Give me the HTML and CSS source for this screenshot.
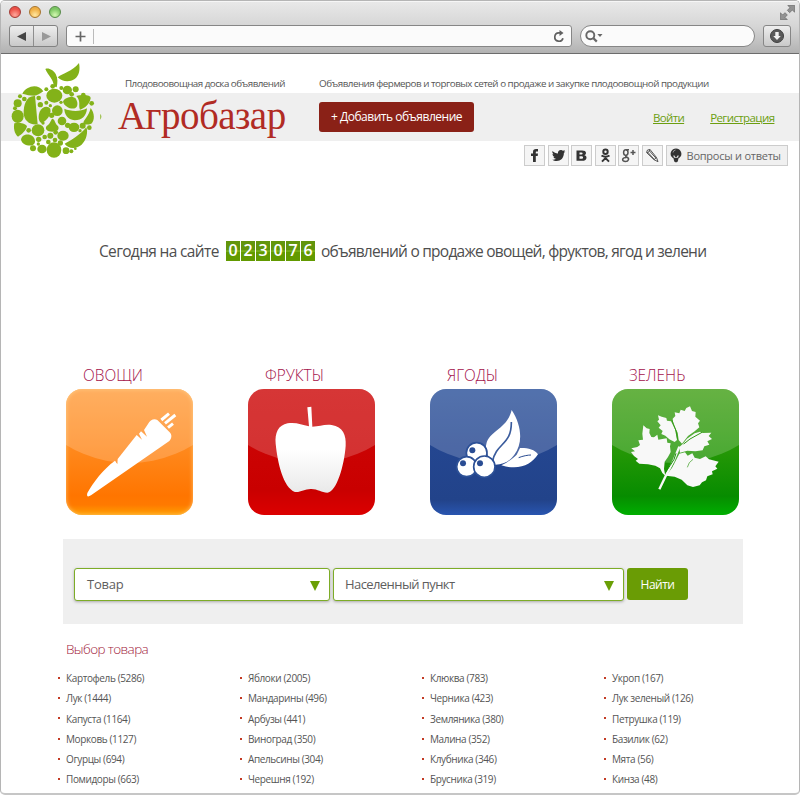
FILE: index.html
```
<!DOCTYPE html>
<html lang="ru">
<head>
<meta charset="utf-8">
<title>Агробазар</title>
<link rel="stylesheet" href="styles.css">
</head>
<body>
<div class="window">
  <header class="chrome">
    <div class="titlebar">
      <i class="light red"></i><i class="light amber"></i><i class="light green"></i>
      <svg class="expand" width="15" height="15" viewBox="0 0 45 45"><path d="M23 1h21v21l-7-7-8 8-7-7 8-8zM1 44V23l7 7 7-7 7 7-7 7 7 7z" fill="#929292" stroke="#666" stroke-width="2"/></svg>
    </div>
    <div class="toolbar">
      <div class="nav">
        <span><svg width="10" height="9" viewBox="0 0 10 9"><path d="M0 4.5 9 0v9z" fill="#444"/></svg></span>
        <span><svg width="10" height="9" viewBox="0 0 10 9"><path d="M10 4.5 1 0v9z" fill="#999"/></svg></span>
      </div>
      <div class="address">
        <svg width="11" height="11" viewBox="0 0 11 11"><path d="M5.5 .5v10M.5 5.500h10" stroke="#666" stroke-width="1.700"/></svg>
        <i class="divider"></i>
        <svg class="reload" width="12" height="13" viewBox="0 0 12 13"><path d="M8 2.800H5.800a4.200 4.200 0 1 0 4.200 5.400" fill="none" stroke="#606060" stroke-width="1.700"/><path d="M6.500 0 10.500 3 6.500 6z" fill="#606060"/></svg>
      </div>
      <div class="find">
        <svg width="18" height="13" viewBox="0 0 18 13"><circle cx="5.3" cy="5.2" r="4" fill="none" stroke="#686868" stroke-width="1.9"/><path d="m8.2 8 3.6 3.6" stroke="#686868" stroke-width="2.2"/><path d="M12.3 4h5.2L15 7z" fill="#686868"/></svg>
      </div>
      <div class="download">
        <svg width="14" height="14" viewBox="0 0 14 14"><circle cx="7" cy="7" r="6.5" fill="#5a5a5a" stroke="#404040"/><path d="M5.3 3h3.4v4h2.100L7 11 3.200 7h2.100z" fill="#f1f1f1"/></svg>
      </div>
    </div>
  </header>

  <main class="site">
    <div class="taglines">
      <span class="tag-left">Плодовоовощная доска объявлений</span>
      <span class="tag-right">Объявления фермеров и торговых сетей о продаже и закупке плодоовощной продукции</span>
    </div>
    <div class="band">
      <svg class="logo" width="94" height="100" viewBox="30 180 282 300">
        <g fill="#83b219">
          <path d="M136 207c9-5 24 3 31 15 7 13 6 27 3 40l-9-3c1-21-16-30-25-52z"/>
          <path d="M173 232c16-13 43-17 64-43 4 20 1 38-13 48-17 11-37 8-51-5z"/>
          <path d="M67 281c12-24 48-32 63-7-11 7-18 13-27 13-15 0-22-3-36-6z"/>
          <path d="M105 288c-26-2-35 28-34 52 1 20 15 36 42 33z"/>
          <ellipse cx="163" cy="287" rx="24" ry="21"/><ellipse cx="202" cy="270" rx="14" ry="13"/><circle cx="227" cy="268" r="9"/>
          <circle cx="158" cy="259" r="7"/><circle cx="184" cy="264" r="6"/><circle cx="139" cy="268" r="6"/><circle cx="215" cy="283" r="7"/>
          <circle cx="60" cy="289" r="6"/><circle cx="53" cy="310" r="12"/><circle cx="73" cy="297" r="7"/><circle cx="116" cy="294" r="7"/>
          <ellipse cx="53" cy="349" rx="18" ry="20"/><circle cx="45" cy="325" r="6"/>
          <path d="M189 305c6-15 33-18 39-8 6 11 6 23-3 28-14 4-33-7-36-20z"/>
          <path d="M229 288c16-4 44-5 43 7-3 17-17 30-32 34-6-13 4-24-11-41z"/>
          <path d="M193 326c18 8 46 10 68-1-2 25-15 35-37 36-22-3-31-19-31-35z"/>
          <path d="M272 324c12 14 13 38 2 47-8 3-24 5-24-2 2-13 15-16 22-45z"/>
          <circle cx="172" cy="332" r="16"/><path d="M119 335c8-16 25-19 32-8 4 15-10 36-27 42-9-5-10-20-5-34z"/>
          <circle cx="139" cy="308" r="6"/><circle cx="121" cy="314" r="8"/><circle cx="151" cy="317" r="5"/><circle cx="183" cy="307" r="5"/><circle cx="275" cy="310" r="7"/><circle cx="250" cy="285" r="7"/>
          <circle cx="186" cy="363" r="13"/><circle cx="203" cy="376" r="8"/><circle cx="155" cy="346" r="8"/>
          <path d="M156 356c10 1 8 15 18 22 6 11-4 17-17 17-15 0-24-8-17-17 8-5 10-11 16-22z"/>
          <path d="M43 370c10-3 29-2 38 8-2 12-14 24-27 32-11-8-14-26-11-40z"/>
          <ellipse cx="114" cy="391" rx="19" ry="18"/><circle cx="86" cy="391" r="7"/><circle cx="129" cy="369" r="5"/>
          <ellipse cx="222" cy="382" rx="16" ry="14"/><circle cx="248" cy="377" r="9"/><circle cx="268" cy="383" r="7"/><circle cx="240" cy="392" r="5"/>
          <path d="M63 419c2-16 23-20 35-10 10 10 9 23-1 27-16 3-31-4-34-17z"/>
          <ellipse cx="189" cy="407" rx="17" ry="15"/><circle cx="151" cy="407" r="9"/><circle cx="134" cy="411" r="7"/><circle cx="116" cy="418" r="8"/><circle cx="167" cy="397" r="7"/>
          <path d="M194 431c19-10 47-27 65-49 6 14 0 40-15 53-19 15-42 9-50-4z"/>
          <ellipse cx="162" cy="450" rx="22" ry="23"/><ellipse cx="126" cy="447" rx="14" ry="13"/><circle cx="99" cy="445" r="9"/>
          <circle cx="145" cy="426" r="7"/><circle cx="165" cy="420" r="7"/><circle cx="181" cy="429" r="8"/><circle cx="198" cy="452" r="10"/><circle cx="214" cy="454" r="6"/><circle cx="115" cy="432" r="5"/><circle cx="226" cy="446" r="4"/>
          <path d="M301 341q6 8 0 18z"/>
        </g>
      </svg>
      <h1 class="brand">Агробазар</h1>
      <a class="add">+ Добавить объявление</a>
      <nav class="auth"><a class="login">Войти</a><a class="register">Регистрация</a></nav>
    </div>
    <div class="social">
      <span class="chip"><svg viewBox="0 0 15 15"><path d="M6 14V8H4V5.600h2V4c0-2.200 1-3 3-3h2v2.400H9.600c-.7 0-.8.3-.8.900v1.300H11L10.700 8H8.800v6z"/></svg></span>
      <span class="chip"><svg viewBox="0 0 15 15"><path d="M1.500 3c1.500 1.500 3.200 2.400 5.500 2.500C6.700 3.300 8 2 9.800 2c1 0 1.500.3 2.100.8L14 2.200l-1 1.600 1.300-.2-1.400 1.500c0 5-3.200 8-7.200 8-1.800 0-3.200-.5-4.500-1.300 1.500 0 2.700-.3 3.700-1.100-1.200-.1-2-.8-2.400-1.800h1.100C2.200 8.500 1.500 7.500 1.500 6l1.100.3C1.600 5.500 1 4.200 1.500 3z"/></svg></span>
      <span class="chip"><svg viewBox="0 0 15 15"><path fill-rule="evenodd" d="M2.500 2.500H8c2.600 0 4 .8 4 2.600 0 1.200-.7 1.900-1.800 2.200 1.500.2 2.300 1.100 2.300 2.400 0 2-1.600 3.100-4.300 3.100H2.500zM5.500 4.500v2h1.800c1.800 0 1.800-2 0-2zm0 3.700v2.600h2c2.100 0 2.100-2.600 0-2.600z"/></svg></span>
      <span class="chip"><svg viewBox="0 0 15 15"><g fill="none" stroke="#333" stroke-width="2"><circle cx="7.500" cy="3.800" r="2.200"/><path d="M3.500 7.500c2.500 1.600 5.500 1.600 8 0M4 13.600l3.500-3.500 3.500 3.500M7.500 8.500v2"/></g></svg></span>
      <span class="chip"><svg viewBox="0 0 15 15"><g fill="none" stroke="#555" stroke-width="1.500"><ellipse cx="4.800" cy="4.600" rx="2.200" ry="2.800"/><path d="M5 1.800h3M5.500 7.200c-1.600.7-.6 1.500.6 2 2.500 1.100 1.600 4.300-1.600 4.300-4 0-4-3.800 1-3.900M12 2v5M9.500 4.500h5"/></g></svg></span>
      <span class="chip"><svg viewBox="0 0 15 15"><path d="M1.500 4.500 2.500 2 5 1.500l6.500 8 1.500 4.200-4-2zM3 4.500l6.500 7.200M4.500 3l6.500 7.200M2 4.500l1.500-.2L5 1.500M9 11.700l2.500-2.200" fill="none" stroke="#555"/></svg></span>
      <a class="faq"><svg width="12" height="15" viewBox="0 0 12 15"><path d="M6 .5a5.300 5.300 0 0 1 4.200 8.600L8 11H4L1.800 9.100A5.300 5.300 0 0 1 6 .5z" fill="#333"/><path d="M3.200 7.500h1.300l.8 1.500h1.400l.8-1.500h1.300L8 9.800H4z" fill="#ddd"/><path d="M3 4.500A3 3 0 0 1 5.500 2" stroke="#999" fill="none"/><path d="M3.700 11h4.600l-.5 2.500L6 14.500l-1.800-1z" fill="#333"/></svg><span>Вопросы и ответы</span></a>
    </div>

    <p class="counter">
      <span class="count-before">Сегодня на сайте</span>
      <span class="digits"><b>0</b><b>2</b><b>3</b><b>0</b><b>7</b><b>6</b></span>
      <span class="count-after">объявлений о продаже овощей, фруктов, ягод и зелени</span>
    </p>

    <section class="cats">
      <a class="cat"><h2>ОВОЩИ</h2>
        <span class="tile veg"><svg viewBox="0 0 381 381"><path d="M64 312C80 282 112 240 147 215l7 10 1-15 57-72 16 14-9-18 6-7 18 16-9-20 12-18c6-12 18-17 28-12l37 37c8 8 6 19-1 26L75 319q-15 9-11-7z" fill="#fff"/><path d="m286 93 23-19M297 103l31-25M306 116l15-12" stroke="#fff" stroke-width="9" fill="none"/></svg></span></a>
      <a class="cat"><h2>ФРУКТЫ</h2>
        <span class="tile fruit"><svg viewBox="0 0 381 381"><defs><linearGradient id="pale" x2="0" y2="1"><stop offset=".5" stop-color="#fff"/><stop offset="1" stop-color="#e9e9e9"/></linearGradient></defs><path d="M183 112l-5-57 12-2 3 60c22 0 35-8 58-5 34 5 44 30 42 62-4 58-27 139-55 141-18 0-30-12-50-11-18 0-31 11-47 9-36-15-52-87-58-145-3-32 8-56 36-61 26-4 42 5 64 9z" fill="url(#pale)"/></svg></span></a>
      <a class="cat"><h2>ЯГОДЫ</h2>
        <span class="tile berry"><svg viewBox="0 0 381 381"><path d="M214 229c18-9 35-20 46-32l10-20c20-1 45 4 54 19-20 32-57 49-110 33z" fill="#fff"/><path d="M266 206c12-5 28-8 37-8" fill="none" stroke="#2a4c92" stroke-width="3"/><path d="M245 63c31 46 34 102 8 134-14 20-34 31-60 30-15-18-30-40-24-62 8-40 63-45 76-102z" fill="#fff"/><path d="M244 99c1 71-45 60-57 120" fill="none" stroke="#3b5c9d" stroke-width="5"/><g fill="#fff" stroke="#2d5197" stroke-width="5"><circle cx="140" cy="192" r="31"/><circle cx="110" cy="233" r="30"/><circle cx="163" cy="233" r="32"/></g><g fill="#294c93"><circle cx="127" cy="184" r="9"/><circle cx="99" cy="223" r="9"/><circle cx="150" cy="223" r="9"/></g></svg></span></a>
      <a class="cat"><h2>ЗЕЛЕНЬ</h2>
        <span class="tile herb"><svg viewBox="36 87 381 381"><g fill="#f8f8f8"><path d="M130 196l10 9 9 2-1 12 6 12 8 1 10-8 3 15 12-2 13-2 2 13 10 2-2 9 2 17-8 15-10 14-2 22 4 20-9-8-7-14-14-8-22-4-26-2-11-9 7-5-12-9-9-12 12-2-11-9 18-4 8-6-5-14 14-2-2-18z"/><path d="M174 166l11 4 14 4 2 8 12 2 12 24 6 32-7 6-16-8-12-11-12-5 4-9-12-10 6-7-10-12 5-5z"/><path d="M270 139l6 14 11 3-1 14 14 12-6 8 4 12-14 12-20 14-18 23-10-11-3-22-13-26-2-16 8-8-2-11 14 3 4-11 12 4 5-9z"/><path d="M249 251l12-15 23-16 16-5 8 4 26-1-8 10 10 9-14 7 6 10-15 5-5 12-22 3-24-2-22 6-2-17z"/><path d="M198 347l18-24 12-22 10-20 17-4 8 10 14-7 7 13 16 4 17-8 10 9 29 7-10 14 6 7-16 8 2 9-16 6-4 12-12 6-7 9-20 5-17-5-17-17-21-9z"/></g><path d="M178 388l18-38 24-46 18-44" fill="none" stroke="#f8f8f8" stroke-width="7"/><path d="M216 181l13 34 4 24M306 217l-36 20-19 15" fill="none" stroke="#329916" stroke-width="3"/><path d="M228 280q-3 18-18 37l-14 21" fill="none" stroke="#189005" stroke-width="3"/><path d="M262 322l6-14 11-10" fill="none" stroke="#329916" stroke-width="2"/></svg></span></a>
    </section>

    <form class="search">
      <div class="field goods"><span>Товар</span><i></i></div>
      <div class="field town"><span>Населенный пункт</span><i></i></div>
      <button type="button">Найти</button>
    </form>

    <h3 class="choose">Выбор товара</h3>
    <section class="lists">
      <ul><li>Картофель (5286)</li><li>Лук (1444)</li><li>Капуста (1164)</li><li>Морковь (1127)</li><li>Огурцы (694)</li><li>Помидоры (663)</li></ul>
      <ul><li>Яблоки (2005)</li><li>Мандарины (496)</li><li>Арбузы (441)</li><li>Виноград (350)</li><li>Апельсины (304)</li><li>Черешня (192)</li></ul>
      <ul><li>Клюква (783)</li><li>Черника (423)</li><li>Земляника (380)</li><li>Малина (352)</li><li>Клубника (346)</li><li>Брусника (319)</li></ul>
      <ul><li>Укроп (167)</li><li>Лук зеленый (126)</li><li>Петрушка (119)</li><li>Базилик (62)</li><li>Мята (56)</li><li>Кинза (48)</li></ul>
    </section>
  </main>
</div>
</body>
</html>
```
FILE: styles.css
```
* { box-sizing: border-box; }
body { margin: 0; height: 800px; overflow: hidden; background: #fff; font-family: "Open Sans", "Noto Sans", sans-serif; color: #555; }
h1, h2, h3, p, ul { margin: 0; padding: 0; font-weight: 400; }
svg { display: block; flex: none; }
.window { width: 800px; height: 795px; border: 1px solid #b5b5b5; border-bottom: 2px solid #c6c6c6; border-radius: 5px; overflow: hidden; background: #fff; }

.chrome { height: 53px; background: linear-gradient(#e9e9e9, #d5d5d5 50%, #b2b2b2); border-bottom: 1px solid #6c6c6c; box-shadow: inset 0 1px #f6f6f6; }
.titlebar { height: 24px; display: flex; padding: 5px 4px 0 8px; gap: 8px; }
.light { width: 12px; height: 12px; border-radius: 50%; border: 1px solid; }
.red { background: radial-gradient(circle at 50% 80%, #ffa89c, #ec5148 65%); border-color: #a33a34; }
.amber { background: radial-gradient(circle at 50% 80%, #ffe7a0, #efae43 65%); border-color: #a6742e; }
.green { background: radial-gradient(circle at 50% 80%, #d3f8b0, #7cc663 65%); border-color: #578a49; }
.expand { margin-left: auto; margin-top: -1px; }
.toolbar { display: flex; padding-left: 8px; height: 22px; }
.nav { display: flex; width: 49px; border: 1px solid #828282; border-radius: 3px; background: linear-gradient(#eee, #c9c9c9); margin-right: 8px; }
.nav span { flex: 1; display: grid; place-items: center; }
.nav span + span { border-left: 1px solid #8e8e8e; }
.address { width: 506px; display: flex; align-items: center; padding: 0 6px 0 8px; border: 1px solid #868686; border-radius: 3px; background: #fbfbfb; margin-right: 8px; }
.divider { width: 1px; height: 15px; background: #bbb; margin-left: 7px; }
.reload { margin-left: auto; }
.find { width: 175px; display: flex; align-items: center; padding-left: 4px; border: 1px solid #868686; border-radius: 11px; background: #fbfbfb; margin-right: 8px; }
.download { width: 28px; display: grid; place-items: center; border: 1px solid #868686; border-radius: 3px; background: linear-gradient(#eee, #c9c9c9); }

.taglines { height: 39px; display: flex; padding: 22px 0 0 124px; font-size: 9.800px; line-height: 15px; white-space: nowrap; }
.tag-left { width: 194px; letter-spacing: -.52px; }
.tag-right { letter-spacing: -.49px; }
.band { position: relative; height: 48px; display: flex; background: #efefef; }
.logo { position: absolute; left: 9px; top: -33px; }
.brand { width: 201px; margin-left: 117px; font: 39px/46px "Liberation Serif", serif; color: #b12b24; white-space: nowrap; letter-spacing: -.55px; }
.add { width: 155px; height: 30px; margin-top: 9px; border-radius: 3px; background: #8a2117; color: #fff; font-size: 12px; line-height: 29px; text-align: center; letter-spacing: -.48px; white-space: nowrap; }
.auth { display: flex; margin-left: 179px; font-size: 11.500px; line-height: 49px; color: #6c9e10; white-space: nowrap; }
.auth a { text-decoration: underline; }
.login { margin-right: 26px; letter-spacing: -.65px; }
.register { letter-spacing: -.6px; }
.social { display: flex; gap: 2.600px; padding: 4px 0 0 523px; }
.chip, .faq { height: 21px; border: 1px solid #ccc; background: #f5f5f5; }
.chip { width: 21px; display: grid; place-items: center; }
.chip svg { width: 15px; height: 15px; fill: #333; }
.faq { width: 122px; display: flex; align-items: center; gap: 5px; padding-left: 3px; font-size: 11px; line-height: 19px; letter-spacing: -.25px; white-space: nowrap; background: #f0f0f0; color: #666; }

.counter { margin-top: 75px; height: 20px; display: flex; padding-left: 98px; font-size: 15.500px; line-height: 20px; white-space: nowrap; color: #4e4e4e; }
.count-before { width: 127px; letter-spacing: -.65px; }
.digits { display: flex; gap: 1px; width: 95px; }
.digits b { width: 14px; height: 20px; background: linear-gradient(#62950c 45%, #87bd25 50%, #629a00 56%); color: #fff; font-weight: 600; font-size: 16px; line-height: 19px; text-align: center; letter-spacing: 0; }
.count-after { letter-spacing: -.76px; }

.cats { display: grid; grid-template-columns: repeat(4, 127px); column-gap: 55px; margin: 103px 0 0 65px; }
.cat h2 { height: 25px; margin-left: 16.500px; font: 300 17px/22px "Open Sans", sans-serif; color: #a3124a; white-space: nowrap; transform: scaleX(.905); transform-origin: left; }
.tile { position: relative; display: block; height: 126px; border-radius: 16px; overflow: hidden; }
.tile::before { content: ""; position: absolute; left: -57px; top: -167px; width: 241px; height: 241px; border-radius: 50%; background: rgba(255,255,255,.19); }
.tile svg { position: relative; width: 127px; height: 127px; }
.veg { background: linear-gradient(#ff9c3b, #ff8b20 43%, #ff7500 85%, #ff7a00 92%, #ffa000); box-shadow: inset 0 0 4px #ffc36e; }
.fruit { background: linear-gradient(#cd0808, #c90000 80%, #dc0000); }
.berry { background: linear-gradient(#2b519a, #244690 45%, #22438a 88%, #2955b0); }
.herb { background: linear-gradient(#43a018, #249706 50%, #078c00 85%, #00ae00); }

.search { width: 680px; height: 85px; margin: 24px 0 0 62px; padding: 29px 11px; display: flex; gap: 3px; background: #efefef; }
.field { height: 33px; display: flex; align-items: center; justify-content: space-between; padding: 0 9px 1px 12px; border: 1px solid #7dac27; border-radius: 3px; background: #fff; box-shadow: 0 1px 3px #aaa; font-size: 13px; color: #5e5e5e; white-space: nowrap; }
.goods { width: 256px; letter-spacing: -.2px; }
.town { width: 291px; padding-left: 11px; letter-spacing: -.58px; }
.field i { border: 5.500px solid transparent; border-top: 10px solid #6a9f06; border-bottom: 0; margin-top: 3px; }
.search button { width: 61px; height: 32px; padding: 0; border: 0; border-radius: 3px; background: #6a9c05; color: #fff; font: 12px "Open Sans", sans-serif; letter-spacing: -.5px; }
.choose { margin: 16px 0 0 65px; height: 19px; font: 300 13.500px/19px "Open Sans", sans-serif; letter-spacing: -.6px; color: #a21a3b; }
.lists { display: grid; grid-template-columns: repeat(4, 182px); margin: 9px 0 0 57px; }
.lists ul { list-style: none; font-size: 10px; line-height: 20.300px; letter-spacing: -.38px; white-space: nowrap; }
.lists li { display: flex; align-items: center; height: 20.300px; }
.lists li::before { content: ""; width: 2px; height: 2px; margin: 0 6px 1px 0; background: #c33b25; }
```
